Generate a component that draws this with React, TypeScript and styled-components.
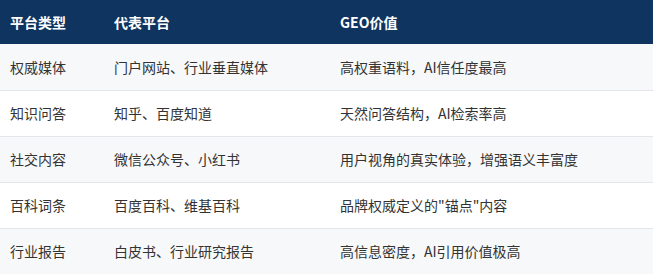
import React from "react";
import styled, { createGlobalStyle } from "styled-components";

const GlobalStyle = createGlobalStyle`
  html, body {
    margin: 0;
    padding: 0;
    background: #ffffff;
  }
  body {
    font-family: "Noto Sans CJK SC", "Noto Sans", sans-serif;
  }
`;

const Table = styled.table`
  width: 653px;
  border-collapse: collapse;
  table-layout: fixed;
  font-size: 14px;
  color: #333333;
`;

const HeadRow = styled.tr`
  background-color: #0f345f;
`;

const Th = styled.th<{ $w?: number }>`
  width: ${(p) => (p.$w ? `${p.$w}px` : "auto")};
  height: 44px;
  padding: 0 10px;
  text-align: left;
  font-weight: 700;
  color: #ffffff;
  box-sizing: border-box;
`;

const Row = styled.tr<{ $alt: boolean }>`
  background-color: ${(p) => (p.$alt ? "#f7f8fa" : "#ffffff")};
  border-bottom: 1px solid #e4e6ea;

  &:last-child {
    border-bottom: none;
  }
`;

const Td = styled.td`
  height: 46px;
  padding: 0 10px;
  box-sizing: border-box;
  vertical-align: middle;
`;

const rows = [
  ["权威媒体", "门户网站、行业垂直媒体", "高权重语料，AI信任度最高"],
  ["知识问答", "知乎、百度知道", "天然问答结构，AI检索率高"],
  ["社交内容", "微信公众号、小红书", "用户视角的真实体验，增强语义丰富度"],
  ["百科词条", "百度百科、维基百科", "品牌权威定义的\"锚点\"内容"],
  ["行业报告", "白皮书、行业研究报告", "高信息密度，AI引用价值极高"],
];

function App() {
  return (
    <>
      <GlobalStyle />
      <Table>
        <thead>
          <HeadRow>
            <Th $w={104}>平台类型</Th>
            <Th $w={226}>代表平台</Th>
            <Th>GEO价值</Th>
          </HeadRow>
        </thead>
        <tbody>
          {rows.map((r, i) => (
            <Row key={r[0]} $alt={i % 2 === 0}>
              <Td>{r[0]}</Td>
              <Td>{r[1]}</Td>
              <Td>{r[2]}</Td>
            </Row>
          ))}
        </tbody>
      </Table>
    </>
  );
}

export default App;
